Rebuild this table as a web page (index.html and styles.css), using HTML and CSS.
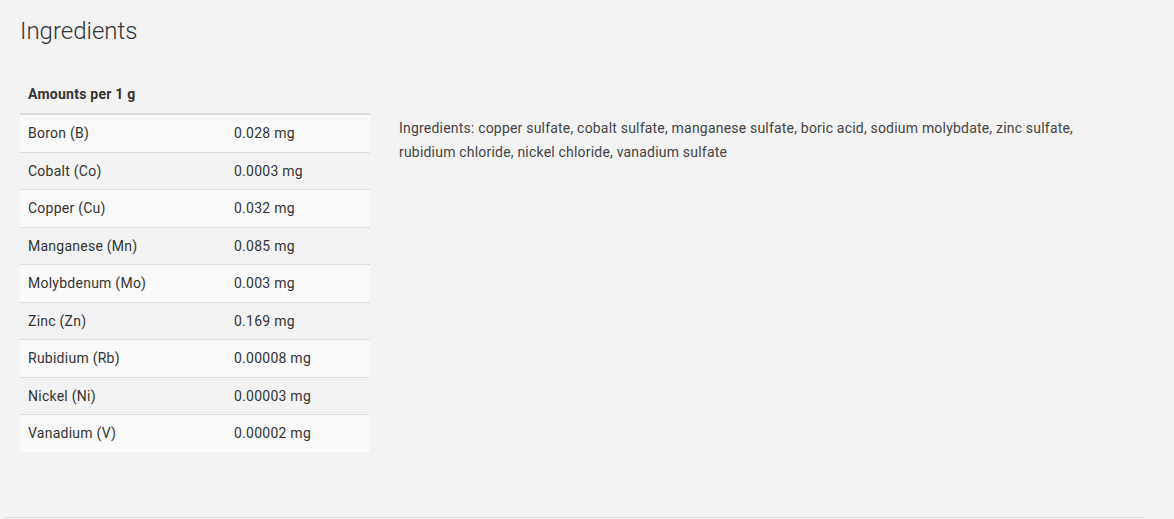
FILE: index.html
```html
<!DOCTYPE html>
<html>
<head>
<meta charset="utf-8">
<link rel="stylesheet" href="styles.css">
</head>
<body>
<div class="panel">
  <h1 class="title">Ingredients</h1>
  <div class="content">
    <table class="amounts">
      <thead>
        <tr><th colspan="2">Amounts per 1 g</th></tr>
      </thead>
      <tbody>
        <tr><td class="name">Boron (B)</td><td>0.028 mg</td></tr>
        <tr><td class="name">Cobalt (Co)</td><td>0.0003 mg</td></tr>
        <tr><td class="name">Copper (Cu)</td><td>0.032 mg</td></tr>
        <tr><td class="name">Manganese (Mn)</td><td>0.085 mg</td></tr>
        <tr><td class="name">Molybdenum (Mo)</td><td>0.003 mg</td></tr>
        <tr><td class="name">Zinc (Zn)</td><td>0.169 mg</td></tr>
        <tr><td class="name">Rubidium (Rb)</td><td>0.00008 mg</td></tr>
        <tr><td class="name">Nickel (Ni)</td><td>0.00003 mg</td></tr>
        <tr><td class="name">Vanadium (V)</td><td>0.00002 mg</td></tr>
      </tbody>
    </table>
    <p class="desc">Ingredients: copper sulfate, cobalt sulfate, manganese sulfate, boric acid, sodium molybdate, zinc sulfate, rubidium chloride, nickel chloride, vanadium sulfate</p>
  </div>
</div>
</body>
</html>
```

FILE: styles.css
```css
html, body {
  margin: 0;
  padding: 0;
  background: #f3f3f3;
  font-family: Roboto, "Liberation Sans", sans-serif;
  color: #333;
}
.panel {
  margin-left: 5px;
  width: 1140px;
  height: 518px;
  box-sizing: border-box;
  border-bottom: 1px solid #dddddd;
  padding-left: 15px;
}
.title {
  margin: 0;
  padding-top: 18px;
  font-size: 24px;
  font-weight: 300;
  line-height: 26.4px;
  color: #333;
}
.content {
  display: flex;
  align-items: flex-start;
  margin-top: 32px;
}
.amounts {
  width: 350px;
  border-collapse: collapse;
  border-spacing: 0;
  font-size: 14px;
  letter-spacing: 0.25px;
  line-height: 20.56px;
  flex: none;
}
.amounts th {
  text-align: left;
  font-weight: 700;
  padding: 8px;
  border-bottom: 2px solid #dddddd;
}
.amounts td {
  padding: 8px;
  border-top: 1px solid #dddddd;
}
.amounts tbody tr:first-child td {
  border-top: 0;
}
.amounts tbody tr:nth-child(odd) {
  background: #f9f9f9;
}
.amounts td.name {
  width: 190px;
}
.desc {
  margin: 39.5px 0 0 29px;
  width: 726px;
  font-size: 14px;
  letter-spacing: 0.2px;
  line-height: 24px;
  color: #444;
}
```
